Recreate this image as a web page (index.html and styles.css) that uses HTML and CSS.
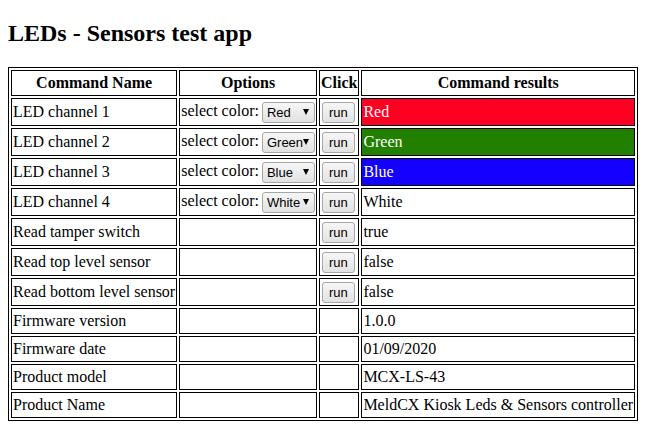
FILE: index.html
```html
<!DOCTYPE html>
<html>
<head>
<meta charset="utf-8">
<link rel="stylesheet" href="styles.css">
</head>
<body>
<h2 class="title">LEDs - Sensors test app</h2>
<table class="grid">
<tr><th>Command Name</th><th>Options</th><th class="click">Click</th><th>Command results</th></tr>
<tr class="act"><td>LED channel 1</td><td>select color:<span class="sel">Red</span></td><td><button class="run">run</button></td><td class="res red">Red</td></tr>
<tr class="act"><td>LED channel 2</td><td>select color:<span class="sel">Green</span></td><td><button class="run">run</button></td><td class="res green">Green</td></tr>
<tr class="act"><td>LED channel 3</td><td>select color:<span class="sel">Blue</span></td><td><button class="run">run</button></td><td class="res blue">Blue</td></tr>
<tr class="act"><td>LED channel 4</td><td>select color:<span class="sel">White</span></td><td><button class="run">run</button></td><td>White</td></tr>
<tr class="act"><td>Read tamper switch</td><td></td><td><button class="run">run</button></td><td>true</td></tr>
<tr class="act"><td>Read top level sensor</td><td></td><td><button class="run">run</button></td><td>false</td></tr>
<tr class="act"><td>Read bottom level sensor</td><td></td><td><button class="run">run</button></td><td>false</td></tr>
<tr><td>Firmware version</td><td></td><td></td><td>1.0.0</td></tr>
<tr><td>Firmware date</td><td></td><td></td><td>01/09/2020</td></tr>
<tr><td>Product model</td><td></td><td></td><td>MCX-LS-43</td></tr>
<tr><td>Product Name</td><td></td><td></td><td>MeldCX Kiosk Leds &amp; Sensors controller</td></tr>
</table>
</body>
</html>
```
FILE: styles.css
```css
body {
  font-family: "Liberation Serif", serif;
  font-size: 16px;
  margin: 8px;
}
.title {
  font-size: 24px;
  margin: 12px 0 20px;
}
.grid {
  border: 1px solid #000;
  border-spacing: 2px;
}
.grid th, .grid td {
  border: 1px solid #000;
  padding: 0 1px;
  height: 24px;
  white-space: nowrap;
  vertical-align: middle;
}
.grid th.click {
  width: 36px;
}
.grid tr.act td {
  height: 26px;
}
.sel {
  display: inline-block;
  vertical-align: middle;
  box-sizing: border-box;
  position: relative;
  width: 53px;
  height: 21px;
  margin-left: 3px;
  line-height: 19px;
  padding-left: 4px;
  font-family: "Liberation Sans", sans-serif;
  font-size: 13px;
  color: #000;
  background: linear-gradient(#f6f6f6, #e2e2e2);
  border: 1px solid #a6a6a6;
  border-radius: 3px;
}
.sel::after {
  content: "";
  position: absolute;
  right: 5px;
  top: 6px;
  border-left: 3px solid transparent;
  border-right: 3px solid transparent;
  border-top: 6px solid #000;
}
.run {
  display: inline-block;
  vertical-align: middle;
  box-sizing: border-box;
  width: 33px;
  height: 21px;
  margin: 0 0 0 1px;
  padding: 0;
  font-family: "Liberation Sans", sans-serif;
  font-size: 13px;
  color: #000;
  background: linear-gradient(#f6f6f6, #e2e2e2);
  border: 1px solid #a6a6a6;
  border-radius: 3px;
}
.res.red { background: #ff0022; color: #fff; }
.res.green { background: #228000; color: #fff; }
.res.blue { background: #1400ff; color: #fff; }
```
